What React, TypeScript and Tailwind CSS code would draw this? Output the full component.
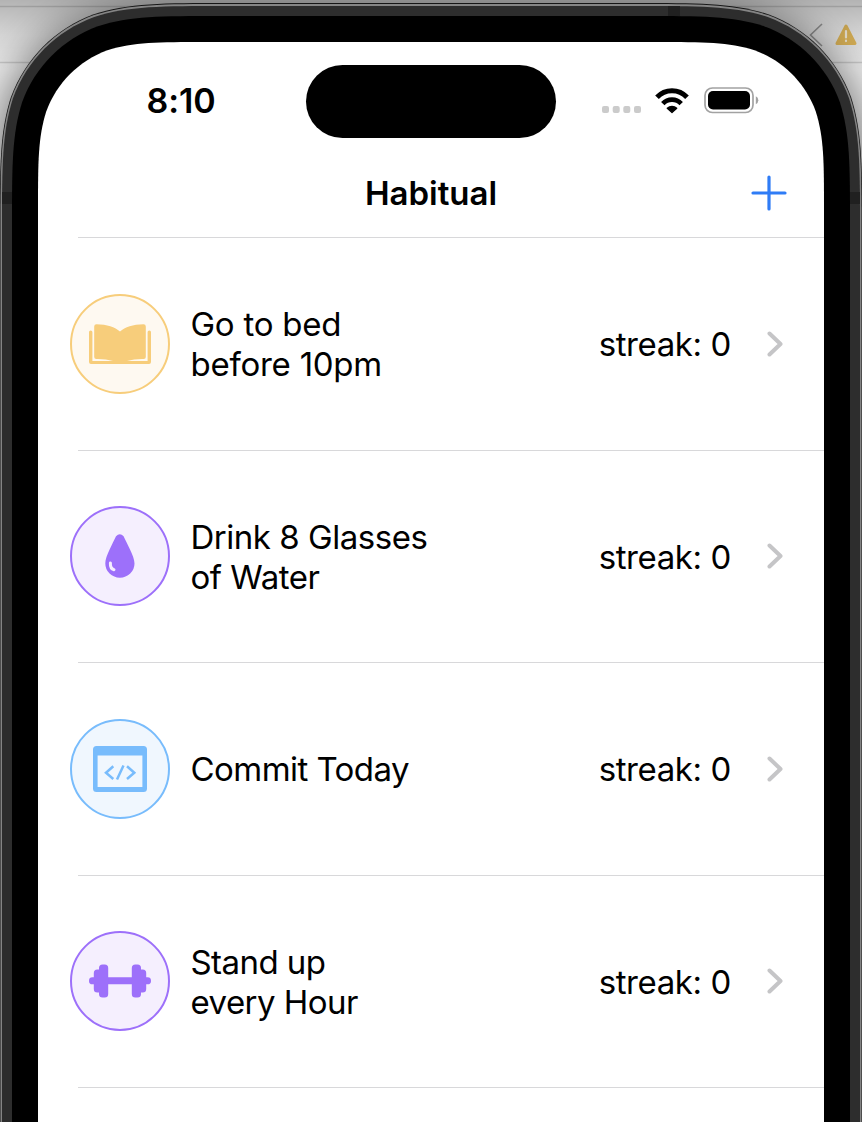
import type { ReactNode } from "react";

type Tone = "amber" | "violet" | "sky";

const tones: Record<Tone, string> = {
  amber: "border-[#f7cd7b] bg-[#fef9f1] text-[#f7cd7b]",
  violet: "border-[#9d70fa] bg-[#f5effe] text-[#9d70fa]",
  sky: "border-[#78bcfc] bg-[#f0f7fe] text-[#78bcfc]",
};

// Continuous-curvature corners, open at the bottom where the device runs off the page.
function devicePath(x: number, y: number, right: number, r: number) {
  const a = 1.528665 * r;
  const b = 1.08849 * r;
  const c = 0.868407 * r;
  const d = 0.0749114 * r;
  const e = 0.631494 * r;
  const f = 0.16906 * r;
  const g = 0.372824 * r;
  return [
    `M${x} 1400V${y + a}`,
    `C${x} ${y + b} ${x} ${y + c} ${x + d} ${y + e}`,
    `C${x + f} ${y + g} ${x + g} ${y + f} ${x + e} ${y + d}`,
    `C${x + c} ${y} ${x + b} ${y} ${x + a} ${y}`,
    `H${right - a}`,
    `C${right - b} ${y} ${right - c} ${y} ${right - e} ${y + d}`,
    `C${right - g} ${y + f} ${right - f} ${y + g} ${right - d} ${y + e}`,
    `C${right} ${y + c} ${right} ${y + b} ${right} ${y + a}`,
    "V1400Z",
  ].join("");
}

function DeviceFrame() {
  return (
    <svg className="absolute inset-0" width="862" height="1122" viewBox="0 0 862 1122" aria-hidden="true">
      <defs>
        <filter id="shade" x="-20%" y="-20%" width="140%" height="140%">
          <feGaussianBlur stdDeviation="24" />
        </filter>
        <linearGradient id="top" x1="0" y1="0" x2="0" y2="1">
          <stop offset="0" stopOpacity=".24" />
          <stop offset=".5" stopOpacity=".09" />
          <stop offset="1" stopOpacity="0" />
        </linearGradient>
      </defs>
      <rect width="862" height="1122" fill="#ececec" />
      <path d="M0 6.5H862M0 62.5H862" stroke="#cbcbcb" strokeWidth="1.6" />
      <path d="M822 24L810.5 35L822 46" fill="none" stroke="#999" strokeWidth="1.6" />
      <path d="M846 26L855 43.5H837Z" fill="#e2b95b" stroke="#e2b95b" strokeWidth="3" strokeLinejoin="round" />
      <path d="M846 31V37.5M846 40.7V41.1" stroke="#f8f0de" strokeWidth="2.2" strokeLinecap="round" />
      <rect width="862" height="70" fill="url(#top)" />
      <path d={devicePath(0, 10, 862, 148)} fill="#000" opacity=".62" filter="url(#shade)" />
      <path d={devicePath(-0.2, 3, 862.2, 149)} fill="#161616" />
      <path d={devicePath(0.5, 4, 861.5, 148)} fill="#858585" />
      <path d={devicePath(2, 6, 860, 146)} fill="#2d2d2d" />
      <path d="M668 6H680V16H668ZM2 192H12V204H2ZM850 192H860V204H850Z" fill="#202020" />
      <path d={devicePath(12, 16, 850, 136)} fill="#000" />
      <path d={devicePath(38, 42, 824, 110)} fill="#fff" />
    </svg>
  );
}

function BookIcon() {
  return (
    <svg width="62" height="40" viewBox="0 0 62 40" fill="currentColor">
      <path d="M31 7.5C26 3.2 18 .3 7.5.3Q5.2.3 5.2 2.5V33Q5.2 35 7.2 35C13 34.8 19 35.6 24 37H3.4V8Q3.4 6.4 1.7 6.4Q0 6.4 0 8V38Q0 40 2 40H60Q62 40 62 38V8Q62 6.4 60.3 6.4Q58.6 6.4 58.6 8V37H38C43 35.6 49 34.8 54.8 35Q56.8 35 56.8 33V2.5Q56.8.3 54.5.3C44 .3 36 3.2 31 7.5Z" />
    </svg>
  );
}

function DropIcon() {
  return (
    <svg width="30" height="44" viewBox="0 0 30 44" fill="none">
      <path d="M11 2.2Q14.8-1.6 18.6 2.2C21.5 9 29.5 22 29.5 29.5A14.6 14.2 0 0 1 .3 29.5C.3 22 8 9 11 2.2Z" fill="currentColor" />
      <path d="M5.4 29C5.2 32.7 6.3 35 9 35.7" stroke="#f5effe" strokeWidth="3" strokeLinecap="round" />
    </svg>
  );
}

function CodeWindowIcon() {
  return (
    <svg width="54" height="46" viewBox="0 0 54 46" fill="none">
      <path fillRule="evenodd" fill="currentColor" d="M3.5 0H50.5Q54 0 54 3.5V42.5Q54 46 50.5 46H3.5Q0 46 0 42.5V3.5Q0 0 3.5 0ZM4.6 9.5V41H49.4V9.5Z" />
      <path d="M20.3 20.3L13 26.8L20.3 33M34 20.3L41.3 26.8L34 33M30.5 19.5L24 33.5" stroke="currentColor" strokeWidth="2.5" />
    </svg>
  );
}

function DumbbellIcon() {
  return (
    <svg width="62" height="34" viewBox="0 0 62 34" fill="currentColor">
      <rect y="13.3" width="62" height="7" rx="3.4" />
      <rect x="4.8" y="5.4" width="12" height="23" rx="3.5" />
      <rect x="45.2" y="5.4" width="12" height="23" rx="3.5" />
      <rect x="10" y=".4" width="9.2" height="33.2" rx="3.5" />
      <rect x="42.8" y=".4" width="9.2" height="33.2" rx="3.5" />
    </svg>
  );
}

const habits: { title: string[]; tracking: string; tone: Tone; icon: ReactNode; streak: number }[] = [
  { title: ["Go to bed", "before 10pm"], tracking: "tracking-[-0.25px]", tone: "amber", icon: <BookIcon />, streak: 0 },
  { title: ["Drink 8 Glasses", "of Water"], tracking: "tracking-[-0.47px]", tone: "violet", icon: <DropIcon />, streak: 0 },
  { title: ["Commit Today"], tracking: "tracking-[-0.55px]", tone: "sky", icon: <CodeWindowIcon />, streak: 0 },
  { title: ["Stand up", "every Hour"], tracking: "tracking-[-0.55px]", tone: "violet", icon: <DumbbellIcon />, streak: 0 },
];

function StatusBar() {
  return (
    <div className="flex h-[118px] items-center">
      <span className="-mt-[2px] w-[268px] shrink-0 pl-[108.5px] text-[34px] font-semibold tracking-[-0.1px]">8:10</span>
      <div className="mt-px h-[73px] w-[250px] shrink-0 rounded-full bg-black" />
      <div className="flex w-[268px] shrink-0 items-center pl-[46px]">
        <svg width="39" height="7" viewBox="0 0 39 7" className="mt-[16px] shrink-0" fill="#cbcbcb">
          <rect width="7" height="7" rx="2" />
          <rect x="10.7" width="7" height="7" rx="2" />
          <rect x="21.3" width="7" height="7" rx="2" />
          <rect x="32" width="7" height="7" rx="2" />
        </svg>
        <svg width="34" height="26" viewBox="0 0 34 26" className="-mt-px ml-[14px] shrink-0" fill="none" stroke="#000">
          <path d="M2 9.2A20.5 20.5 0 0 1 32 9.2" strokeWidth="5" />
          <path d="M7.8 15.6A12.6 12.6 0 0 1 26.2 15.6" strokeWidth="4.7" />
          <path d="M12.2 20.2A7.3 7.3 0 0 1 21.8 20.2L17 24.6Z" fill="#000" strokeWidth="1.2" strokeLinejoin="round" />
        </svg>
        <svg width="55" height="27" viewBox="0 0 55 27" className="-mt-px ml-[15px] shrink-0">
          <rect x="1" y="1" width="48" height="24.5" rx="7.5" fill="none" stroke="#a2a2a2" strokeWidth="1.7" />
          <rect x="4" y="4" width="42" height="18.5" rx="5" fill="#000" />
          <path d="M51.8 9.3Q54.3 10.5 54.3 13.3Q54.3 16 51.8 17.3Z" fill="#a2a2a2" />
        </svg>
      </div>
    </div>
  );
}

export default function App() {
  return (
    <div className="relative h-[1122px] w-[862px] overflow-hidden font-['Inter','Liberation_Sans',sans-serif] text-black">
      <DeviceFrame />
      <main className="relative mx-[38px] pt-[42px]">
        <StatusBar />
        <header className="grid h-[77px] grid-cols-[1fr_auto_1fr] items-start pt-[13px]">
          <h1 className="col-start-2 text-[33px] leading-[40px] font-semibold tracking-[0px]">Habitual</h1>
          <button aria-label="Add habit" className="mt-[2px] mr-[37px] justify-self-end text-[#2f7cf6]">
            <svg width="36" height="36" viewBox="0 0 36 36" fill="none" stroke="currentColor" strokeWidth="3.2" strokeLinecap="round">
              <path d="M18 2V34M2 18H34" />
            </svg>
          </button>
        </header>
        <ul className="ml-[40px] border-t border-[#d8d8da]">
          {habits.map((habit) => (
            <li key={habit.title[0]} className="flex h-[212.5px] items-center border-b border-[#d8d8da] pr-[41px]">
              <div className={`-ml-[8px] flex size-[100px] shrink-0 items-center justify-center rounded-full border-2 ${tones[habit.tone]}`}>
                {habit.icon}
              </div>
              <div className={`mt-[0.8px] ml-[20.5px] flex-1 text-[33px] leading-[40px] ${habit.tracking}`}>
                {habit.title.map((line) => (
                  <div key={line}>{line}</div>
                ))}
              </div>
              <span className="mt-[0.8px] text-[33px] leading-[40px] tracking-[-0.4px]">streak: {habit.streak}</span>
              <svg width="16" height="26" viewBox="0 0 16 26" fill="none" className="ml-[36px]">
                <path d="M2.5 2.5L13.5 13L2.5 23.5" stroke="#c5c5c7" strokeWidth="4" strokeLinecap="round" strokeLinejoin="round" />
              </svg>
            </li>
          ))}
        </ul>
      </main>
    </div>
  );
}
